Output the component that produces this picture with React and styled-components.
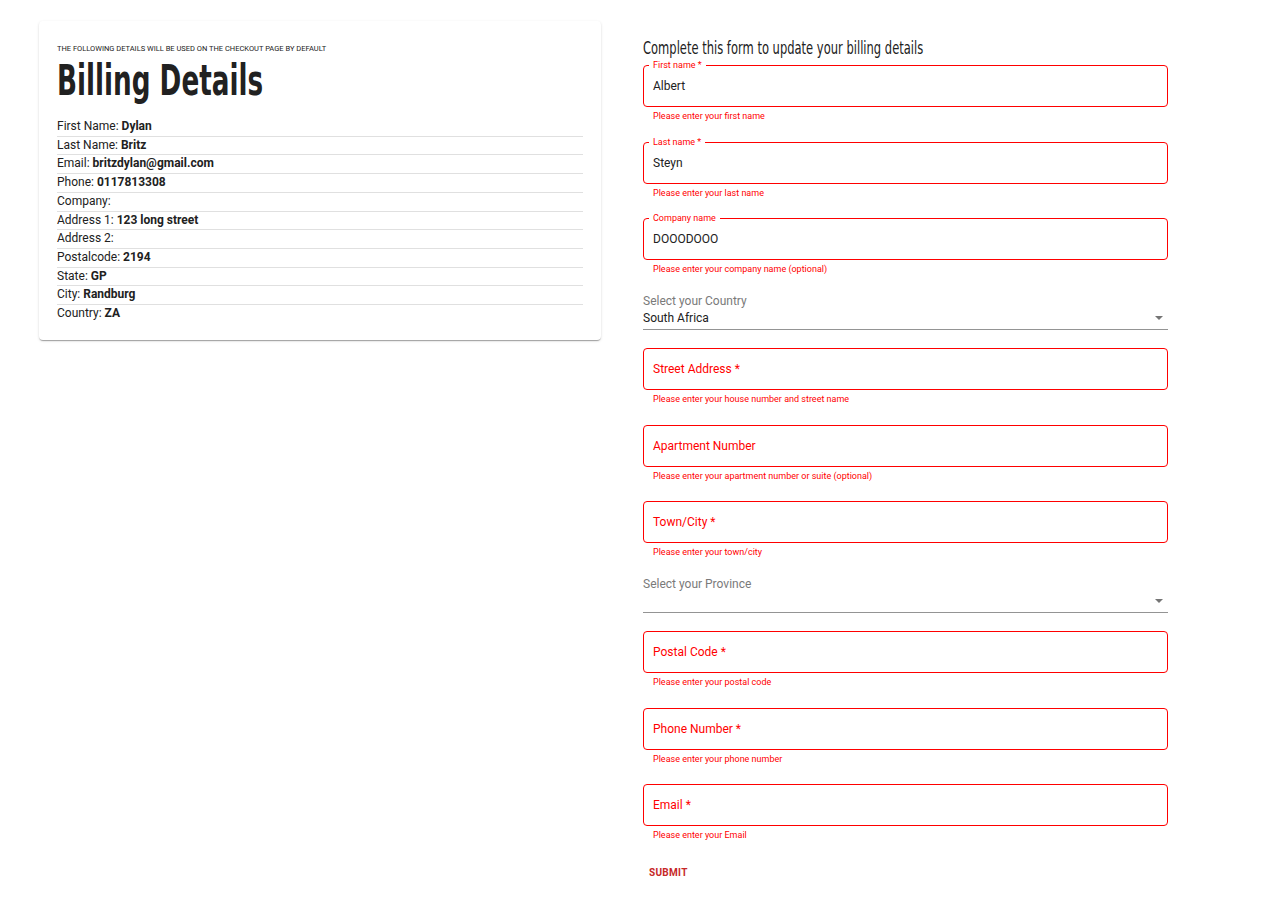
import styled, { createGlobalStyle } from "styled-components";

const GlobalStyle = createGlobalStyle`
  body {
    margin: 0;
    background: #fff;
    font-family: Roboto, "Liberation Sans", sans-serif;
    color: #212121;
  }
`;

const RED = "#ff0000";

const account = [
  ["First Name", "Dylan"],
  ["Last Name", "Britz"],
  ["Email", "britzdylan@gmail.com"],
  ["Phone", "0117813308"],
  ["Company", ""],
  ["Address 1", "123 long street"],
  ["Address 2", ""],
  ["Postalcode", "2194"],
  ["State", "GP"],
  ["City", "Randburg"],
  ["Country", "ZA"],
];

const fieldsTop = [
  { label: "First name *", value: "Albert", help: "Please enter your first name" },
  { label: "Last name *", value: "Steyn", help: "Please enter your last name" },
  { label: "Company name", value: "DOOODOOO", help: "Please enter your company name (optional)" },
];

const fieldsMiddle = [
  { label: "Street Address *", help: "Please enter your house number and street name" },
  { label: "Apartment Number", help: "Please enter your apartment number or suite (optional)" },
  { label: "Town/City *", help: "Please enter your town/city" },
];

const fieldsBottom = [
  { label: "Postal Code *", help: "Please enter your postal code" },
  { label: "Phone Number *", help: "Please enter your phone number" },
  { label: "Email *", help: "Please enter your Email" },
];

const TextField = ({ label, value, help }) => (
  <FieldBlock>
    <OutlinedBox>
      {value ? (
        <>
          <NotchLabel>{label}</NotchLabel>
          <InputText>{value}</InputText>
        </>
      ) : (
        <Placeholder>{label}</Placeholder>
      )}
    </OutlinedBox>
    <HelperText>{help}</HelperText>
  </FieldBlock>
);

const SelectField = ({ label, value }) => (
  <SelectBlock>
    <SelectLabel>{label}</SelectLabel>
    <SelectRow>
      <span>{value}</span>
      <svg width="8" height="4" viewBox="0 0 8 4">
        <path d="M0 0h8L4 4z" fill="#757575" />
      </svg>
    </SelectRow>
  </SelectBlock>
);

export default function App() {
  return (
    <>
      <GlobalStyle />
      <Page>
        <Card>
          <Overline>The following details will be used on the checkout page by default</Overline>
          <Heading>Billing Details</Heading>
          <List>
            {account.map(([k, v]) => (
              <Row key={k}>
                {k}: <strong>{v}</strong>
              </Row>
            ))}
          </List>
        </Card>

        <Form>
          <FormTitle>Complete this form to update your billing details</FormTitle>
          {fieldsTop.map((f) => (
            <TextField key={f.label} {...f} />
          ))}
          <SelectField label="Select your Country" value="South Africa" />
          {fieldsMiddle.map((f) => (
            <TextField key={f.label} {...f} />
          ))}
          <SelectField label="Select your Province" value="" />
          {fieldsBottom.map((f) => (
            <TextField key={f.label} {...f} />
          ))}
          <SubmitButton type="button">Submit</SubmitButton>
        </Form>
      </Page>
    </>
  );
}

const Page = styled.div`
  display: grid;
  grid-template-columns: 562px 525px;
  column-gap: 42px;
  align-items: start;
  padding: 21px 0 20px 39px;
`;

const Card = styled.div`
  background: #fff;
  border-radius: 4px;
  box-shadow: 0 2px 1px -1px rgba(0, 0, 0, 0.2), 0 1px 1px 0 rgba(0, 0, 0, 0.14),
    0 1px 3px 0 rgba(0, 0, 0, 0.12);
  padding: 23px 18px 17px;
`;

const Overline = styled.div`
  font-size: 7.5px;
  line-height: 9px;
  text-transform: uppercase;
  color: #212121;
`;

/* condensed display face: squeeze the sans horizontally */
const Heading = styled.h1`
  margin: 6px 0 15px;
  font-family: "DejaVu Sans", sans-serif;
  font-weight: 700;
  font-size: 42px;
  line-height: 44px;
  color: #212121;
  transform: scaleX(0.625);
  transform-origin: left center;
  white-space: nowrap;
`;

const List = styled.div`
  display: flex;
  flex-direction: column;
`;

const Row = styled.div`
  font-size: 12px;
  line-height: 17.7px;
  border-bottom: 1px solid #e0e0e0;

  &:last-child {
    border-bottom: none;
  }

  strong {
    font-weight: 700;
  }
`;

const Form = styled.div`
  display: flex;
  flex-direction: column;
  padding-top: 16px;
`;

const FormTitle = styled.h2`
  margin: 0 0 6px;
  font-family: "DejaVu Sans", sans-serif;
  font-weight: 400;
  font-size: 18px;
  line-height: 22px;
  color: #212121;
  transform: scaleX(0.64);
  transform-origin: left center;
  white-space: nowrap;
`;

const FieldBlock = styled.div`
  display: flex;
  flex-direction: column;
  margin-bottom: 19px;
`;

const OutlinedBox = styled.div`
  position: relative;
  height: 42px;
  box-sizing: border-box;
  border: 1px solid ${RED};
  border-radius: 4px;
  padding: 0 9px;
  display: flex;
  align-items: center;
  font-size: 12px;
`;

const NotchLabel = styled.span`
  position: absolute;
  top: -6px;
  left: 5px;
  padding: 0 4px;
  background: #fff;
  font-size: 9px;
  line-height: 11px;
  color: ${RED};
`;

const InputText = styled.span`
  color: #212121;
`;

const Placeholder = styled.span`
  color: ${RED};
`;

const HelperText = styled.div`
  margin: 4px 0 0 10px;
  font-size: 9px;
  line-height: 11.5px;
  color: ${RED};
`;

const SelectBlock = styled.div`
  display: flex;
  flex-direction: column;
  margin-bottom: 18.5px;
`;

const SelectLabel = styled.div`
  font-size: 12px;
  line-height: 12px;
  color: #7a7a7a;
`;

const SelectRow = styled.div`
  height: 23px;
  box-sizing: border-box;
  display: flex;
  align-items: center;
  justify-content: space-between;
  padding-right: 5px;
  border-bottom: 1px solid #949494;
  font-size: 12px;
  color: #212121;
`;

const SubmitButton = styled.button`
  align-self: flex-start;
  padding: 6px 6px 8px;
  border: none;
  background: transparent;
  font-family: Roboto, "Liberation Sans", sans-serif;
  font-weight: 700;
  font-size: 10px;
  letter-spacing: 0.3px;
  text-transform: uppercase;
  color: #c62828;
  cursor: pointer;
`;
